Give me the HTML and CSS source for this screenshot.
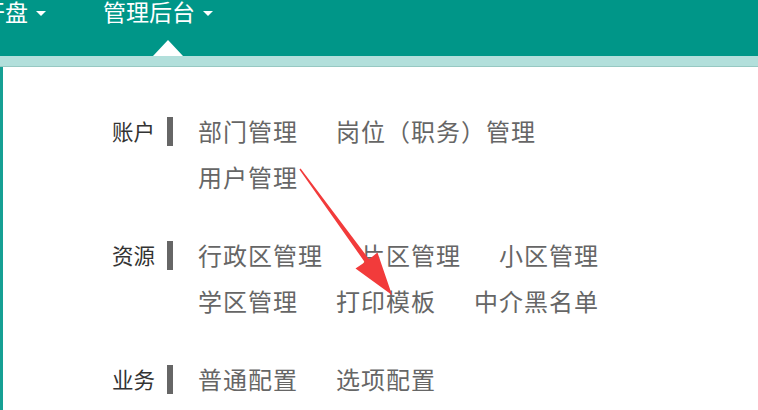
FILE: index.html
```html
<!DOCTYPE html>
<html lang="zh-CN">
<head>
<meta charset="utf-8">
<title>管理后台</title>
<link rel="stylesheet" href="styles.css">
</head>
<body>
<header class="topbar">
  <nav class="nav">
    <div class="nav-item">开盘<span class="caret"></span></div>
    <div class="nav-item active">管理后台<span class="caret"></span><span class="pointer"></span></div>
  </nav>
</header>
<div class="band"></div>
<main class="panel">
  <section class="group">
    <div class="label">账户</div>
    <div class="bar"></div>
    <div class="items">
      <a class="item">部门管理</a>
      <a class="item">岗位（职务）管理</a>
      <a class="item">用户管理</a>
    </div>
  </section>
  <section class="group">
    <div class="label">资源</div>
    <div class="bar"></div>
    <div class="items">
      <a class="item">行政区管理</a>
      <a class="item">片区管理</a>
      <a class="item">小区管理</a>
      <a class="item">学区管理</a>
      <a class="item">打印模板</a>
      <a class="item">中介黑名单</a>
    </div>
  </section>
  <section class="group">
    <div class="label">业务</div>
    <div class="bar"></div>
    <div class="items">
      <a class="item">普通配置</a>
      <a class="item">选项配置</a>
    </div>
  </section>
</main>
<svg class="arrow" width="758" height="410" viewBox="0 0 758 410">
  <polygon fill="#f23b3b" points="300.6,168.4 299.4,169.6 364.8,262.2 355.5,268.6 392,295 377.5,252.6 369.0,259.2"/>
</svg>
</body>
</html>
```
FILE: styles.css
```css
* { box-sizing: border-box; }
html, body {
  margin: 0;
  padding: 0;
  width: 758px;
  height: 410px;
  overflow: hidden;
  background: #ffffff;
  font-family: "Noto Sans CJK SC", "Noto Sans", sans-serif;
}
body { position: relative; }

.topbar {
  height: 56px;
  background: #009688;
  overflow: hidden;
}
.nav {
  display: flex;
  gap: 57px;
  margin-left: -18px;
}
.nav-item {
  position: relative;
  display: flex;
  align-items: flex-start;
  height: 56px;
  color: #ffffff;
  font-size: 23px;
  line-height: 23px;
}
.caret {
  width: 0;
  height: 0;
  border-top: 5px solid #ffffff;
  border-left: 5px solid transparent;
  border-right: 5px solid transparent;
  margin-left: 8px;
  margin-top: 11px;
}
.pointer {
  position: absolute;
  left: 50px;
  bottom: 0;
  width: 0;
  height: 0;
  border-bottom: 16px solid #ffffff;
  border-left: 15px solid transparent;
  border-right: 15px solid transparent;
}

.band {
  height: 11px;
  background: #b2dfdb;
  border-bottom: 1px solid #96c8c2;
}

.panel {
  height: 343px;
  border-left: 3px solid #16a094;
  padding: 41px 0 0 109px;
}
.group {
  display: flex;
  align-items: flex-start;
  margin-bottom: 32px;
}
.label {
  font-size: 21.5px;
  line-height: 46px;
  color: #333333;
  width: 44px;
}
.bar {
  width: 6px;
  height: 29px;
  background: #666666;
  margin: 9px 25px 0 11px;
}
.items {
  display: flex;
  flex-wrap: wrap;
  column-gap: 38px;
  width: 440px;
}
.item {
  font-size: 24px;
  line-height: 46px;
  letter-spacing: 1px;
  color: #666666;
  white-space: nowrap;
}

.arrow {
  position: absolute;
  left: 0;
  top: 0;
  pointer-events: none;
}
```
